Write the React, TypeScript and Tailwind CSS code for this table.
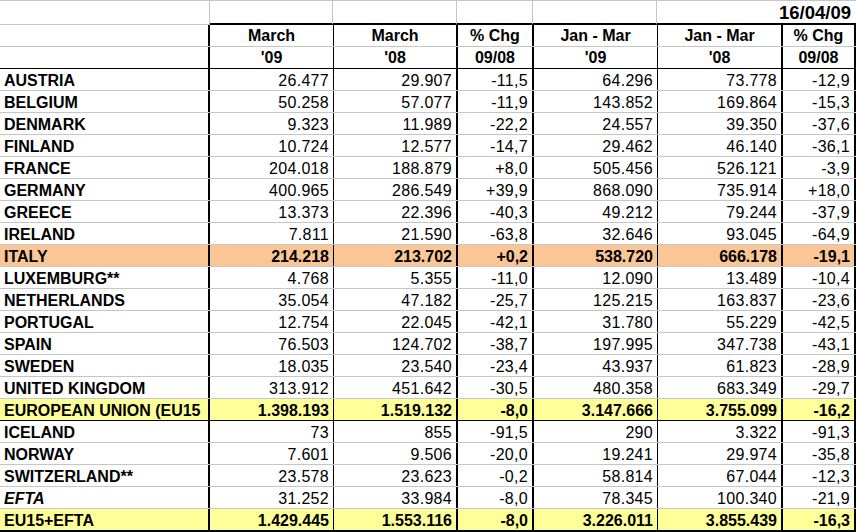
import React from "react";

type Row = {
  name: string;
  v: string[];
  kind?: "italy" | "total" | "efta";
};

const ROWS: Row[] = [
  { name: "AUSTRIA", v: ["26.477", "29.907", "-11,5", "64.296", "73.778", "-12,9"] },
  { name: "BELGIUM", v: ["50.258", "57.077", "-11,9", "143.852", "169.864", "-15,3"] },
  { name: "DENMARK", v: ["9.323", "11.989", "-22,2", "24.557", "39.350", "-37,6"] },
  { name: "FINLAND", v: ["10.724", "12.577", "-14,7", "29.462", "46.140", "-36,1"] },
  { name: "FRANCE", v: ["204.018", "188.879", "+8,0", "505.456", "526.121", "-3,9"] },
  { name: "GERMANY", v: ["400.965", "286.549", "+39,9", "868.090", "735.914", "+18,0"] },
  { name: "GREECE", v: ["13.373", "22.396", "-40,3", "49.212", "79.244", "-37,9"] },
  { name: "IRELAND", v: ["7.811", "21.590", "-63,8", "32.646", "93.045", "-64,9"] },
  { name: "ITALY", v: ["214.218", "213.702", "+0,2", "538.720", "666.178", "-19,1"], kind: "italy" },
  { name: "LUXEMBURG**", v: ["4.768", "5.355", "-11,0", "12.090", "13.489", "-10,4"] },
  { name: "NETHERLANDS", v: ["35.054", "47.182", "-25,7", "125.215", "163.837", "-23,6"] },
  { name: "PORTUGAL", v: ["12.754", "22.045", "-42,1", "31.780", "55.229", "-42,5"] },
  { name: "SPAIN", v: ["76.503", "124.702", "-38,7", "197.995", "347.738", "-43,1"] },
  { name: "SWEDEN", v: ["18.035", "23.540", "-23,4", "43.937", "61.823", "-28,9"] },
  { name: "UNITED KINGDOM", v: ["313.912", "451.642", "-30,5", "480.358", "683.349", "-29,7"] },
  { name: "EUROPEAN UNION (EU15", v: ["1.398.193", "1.519.132", "-8,0", "3.147.666", "3.755.099", "-16,2"], kind: "total" },
  { name: "ICELAND", v: ["73", "855", "-91,5", "290", "3.322", "-91,3"] },
  { name: "NORWAY", v: ["7.601", "9.506", "-20,0", "19.241", "29.974", "-35,8"] },
  { name: "SWITZERLAND**", v: ["23.578", "23.623", "-0,2", "58.814", "67.044", "-12,3"] },
  { name: "EFTA", v: ["31.252", "33.984", "-8,0", "78.345", "100.340", "-21,9"], kind: "efta" },
  { name: "EU15+EFTA", v: ["1.429.445", "1.553.116", "-8,0", "3.226.011", "3.855.439", "-16,3"], kind: "total" },
];

// widths and right-hand rules of the six figure columns
const COLS = [
  "w-[124px] border-r border-r-black",
  "w-[124px] border-r-2 border-r-black",
  "w-[76px] border-r-2 border-r-black",
  "w-[124px] border-r border-r-black",
  "w-[125px] border-r-2 border-r-black",
  "w-[73px] border-r-2 border-r-black",
];

const HEAD = [
  ["March", "'09"],
  ["March", "'08"],
  ["% Chg", "09/08"],
  ["Jan - Mar", "'09"],
  ["Jan - Mar", "'08"],
  ["% Chg", "09/08"],
];

function DataRow({ r, last }: { r: Row; last: boolean }) {
  const bg = r.kind === "italy" ? "bg-[#fac696]" : r.kind === "total" ? "bg-[#ffff99]" : "bg-white";
  const bold = r.kind === "italy" || r.kind === "total";
  const bottom = last
    ? "border-b-2 border-b-black h-[23px]"
    : r.kind === "total"
    ? "border-b border-b-black h-[22px]"
    : "border-b border-b-[#c6c6c6] h-[22px]";
  return (
    <div className={`flex ${bg} ${bottom}`}>
      <div
        className={`w-[210px] border-r-2 border-r-black flex items-end pb-[1px] pl-[4px] overflow-hidden whitespace-nowrap font-bold ${
          r.kind === "efta" ? "italic" : ""
        }`}
      >
        {r.name}
      </div>
      {r.v.map((x, i) => (
        <div
          key={i}
          className={`${COLS[i]} flex items-end justify-end pb-[1px] pr-[4px] tracking-[0.3px] ${bold ? "font-bold tracking-normal" : ""}`}
        >
          {x}
        </div>
      ))}
    </div>
  );
}

export default function App() {
  return (
    <div className="w-[856px] h-[532px] bg-white text-black text-[16px] leading-none font-['Liberation_Sans',Arial,sans-serif] overflow-hidden">
      {/* date row */}
      <div className="flex h-[25px] border-t border-t-[#c6c6c6]">
        <div className="w-[210px] border-r border-r-[#c6c6c6] border-b border-b-[#c6c6c6]" />
        <div className="w-[123px] border-r border-r-[#c6c6c6] border-b-2 border-b-black" />
        <div className="w-[124px] border-r border-r-[#c6c6c6] border-b-2 border-b-black" />
        <div className="w-[76px] border-r border-r-[#c6c6c6] border-b-2 border-b-black" />
        <div className="w-[124px] border-r border-r-[#c6c6c6] border-b-2 border-b-black" />
        <div className="w-[199px] border-b-2 border-b-black flex items-end justify-end pr-[5px] pb-[1px] font-bold text-[18.5px]">
          16/04/09
        </div>
      </div>
      {/* header rows */}
      {[0, 1].map((line) => (
        <div
          key={line}
          className={`flex h-[22px] ${line === 0 ? "border-b border-b-[#c6c6c6]" : "border-b border-b-black"}`}
        >
          <div className="w-[210px] border-r-2 border-r-black" />
          {HEAD.map((h, i) => (
            <div key={i} className={`${COLS[i]} flex items-center justify-center font-bold`}>
              {h[line]}
            </div>
          ))}
        </div>
      ))}
      {ROWS.map((r, i) => (
        <DataRow key={r.name} r={r} last={i === ROWS.length - 1} />
      ))}
    </div>
  );
}
